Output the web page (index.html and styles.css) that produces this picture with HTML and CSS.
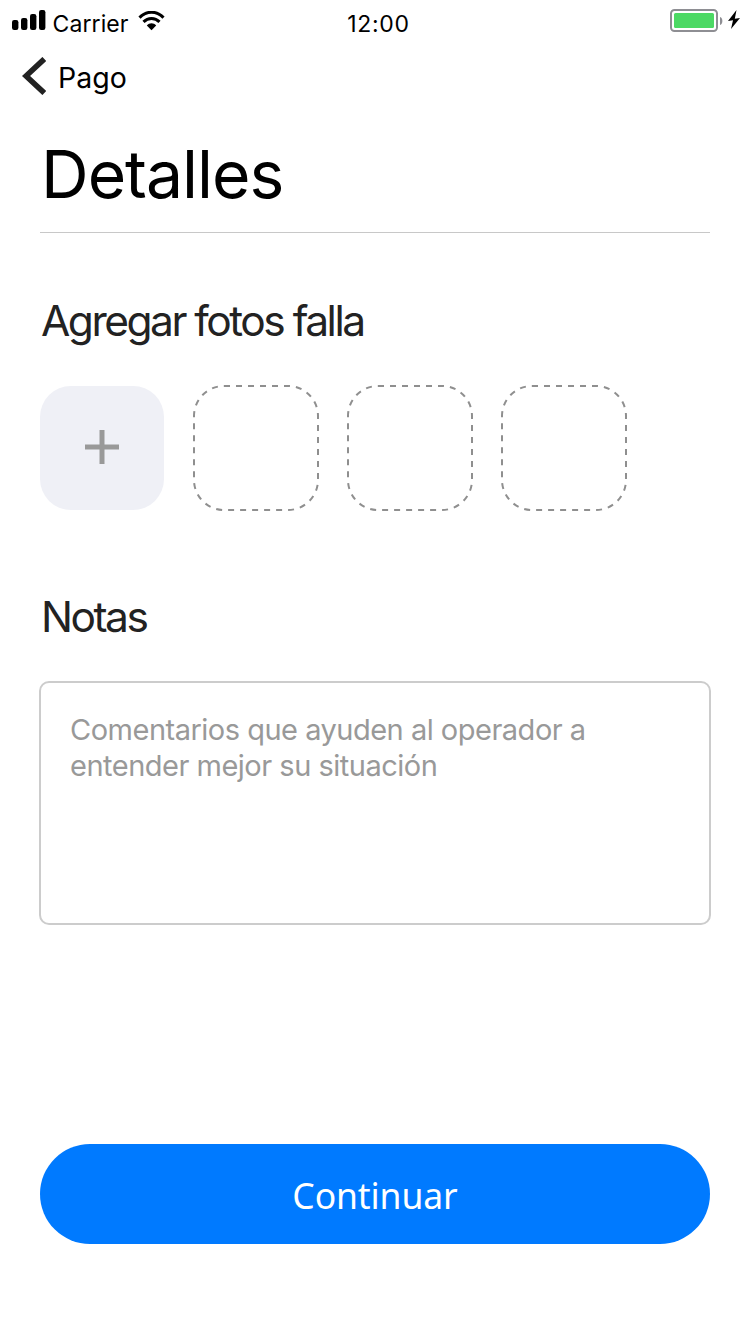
FILE: index.html
```html
<!DOCTYPE html>
<html lang="es">
<head>
<meta charset="utf-8">
<title>Detalles</title>
<link rel="stylesheet" href="styles.css">
</head>
<body>
<div class="screen">
  <header class="status">
    <div class="status-left">
      <svg class="signal" width="34" height="21" viewBox="0 0 34 21"><rect x="0" y="10" width="6.400" height="10" rx="2.200"/><rect x="9" y="8" width="6.400" height="12" rx="2.200"/><rect x="18" y="4" width="6.400" height="16" rx="2.200"/><rect x="27" y="0" width="6.400" height="20" rx="2.200"/></svg>
      <span class="carrier">Carrier</span>
      <svg class="wifi" width="28" height="20" viewBox="0 0 28 20"><path d="M1.500 6.600C8.500-.6 18.500-.6 25.500 6.600" fill="none" stroke="#000" stroke-width="3"/><path d="M5.500 10.900C10 6.200 17 6.200 21.500 10.900" fill="none" stroke="#000" stroke-width="3"/><path d="M8.800 14.400C11.500 11.600 15.500 11.600 18.200 14.400L13.500 19.200Z"/></svg>
    </div>
    <span class="clock">12:00</span>
    <svg class="battery" width="72" height="24" viewBox="0 0 72 24"><rect x="1" y="1" width="46" height="21" rx="3.500" fill="#fff" stroke="#8e8e93" stroke-width="2"/><rect x="4" y="4" width="40" height="15" rx="1.500" fill="#4cd964"/><path d="M50 8C53.200 9 53.200 15 50 16Z" fill="#8e8e93"/><path d="M66.500 1L58 12L63 11.300L61 20L70 9L64.800 9.800Z"/></svg>
  </header>
  <nav class="nav">
    <svg class="chevron" width="24" height="38" viewBox="0 0 24 38"><path d="M22.300 2L4 19L22.300 36" fill="none" stroke="#222" stroke-width="5.600"/></svg>
    <span class="back">Pago</span>
  </nav>
  <main class="content">
    <h1 class="title">Detalles</h1>
    <h2 class="section photos-heading">Agregar fotos falla</h2>
    <div class="photos">
      <button class="add" aria-label="Agregar"><svg width="34" height="34" viewBox="0 0 34 34"><path d="M17 0V34M0 17H34" stroke="#999" stroke-width="5"/></svg></button>
      <svg class="slot" viewBox="0 0 126 126"><rect x="1" y="1" width="124" height="124" rx="30"/></svg>
      <svg class="slot" viewBox="0 0 126 126"><rect x="1" y="1" width="124" height="124" rx="30"/></svg>
      <svg class="slot" viewBox="0 0 126 126"><rect x="1" y="1" width="124" height="124" rx="30"/></svg>
    </div>
    <h2 class="section notes-heading">Notas</h2>
    <div class="notes"><span class="line1">Comentarios que ayuden al operador a</span><br><span class="line2">entender mejor su situación</span></div>
    <button class="continue"><span>Continuar</span></button>
  </main>
</div>
</body>
</html>
```
FILE: styles.css
```css
* { box-sizing: border-box; }
body { margin: 0; background: #fff; font-family: Inter, "Liberation Sans", sans-serif; color: #000; }
svg { display: block; flex: none; }
button { border: 0; padding: 0; font: inherit; }
.screen { width: 750px; height: 1334px; }
.status { display: grid; grid-template-columns: 1fr auto 1fr; height: 40px; padding: 9px 8px 0 12px; font-size: 23px; line-height: 30px; }
.status-left { display: flex; align-items: flex-start; }
.carrier { margin-left: 6.500px; width: 85.500px; letter-spacing: .1px; }
.signal { margin-top: 1px; }
.wifi { margin-top: 2px; }
.clock { padding-left: 3px; letter-spacing: .7px; }
.battery { justify-self: end; }
.nav { display: flex; height: 72px; padding: 17px 0 0 22px; }
.back { margin-left: 12px; font-size: 28.500px; line-height: 42px; }
.content { padding: 0 40px; }
.title { margin: 0; height: 121px; padding: 22px 0 0 1px; border-bottom: 1px solid #c8c8c8; font-size: 66px; line-height: 80px; font-weight: 400; letter-spacing: -1px; }
.section { margin: 0; padding-left: 1px; color: #222; font-size: 42.500px; line-height: 60px; font-weight: 400; letter-spacing: -2.500px; }
.photos-heading { margin-top: 58px; }
.photos { display: flex; align-items: center; gap: 28px; margin-top: 34px; height: 126px; }
.add { display: flex; align-items: center; justify-content: center; width: 124px; height: 124px; margin-right: 1px; padding-bottom: 2px; border-radius: 31px; background: #eff0f6; }
.slot { width: 126px; height: 126px; }
.slot rect { fill: none; stroke: #8f8f8f; stroke-width: 2; stroke-dasharray: 6 6; }
.notes-heading { margin-top: 76px; }
.notes { height: 244px; margin: 34px -1px 0; padding: 29px; border: 2px solid #ccc; border-radius: 10px; color: #999; font-size: 29px; font-weight: 400; line-height: 36px; letter-spacing: -.5px; white-space: nowrap; }
.continue { display: block; width: 670px; height: 100px; margin-top: 219px; padding-top: 2px; border-radius: 50px; background: #007aff; color: #fff; font: 400 35.500px/97px "Noto Sans", sans-serif; letter-spacing: -.1px; }
```
